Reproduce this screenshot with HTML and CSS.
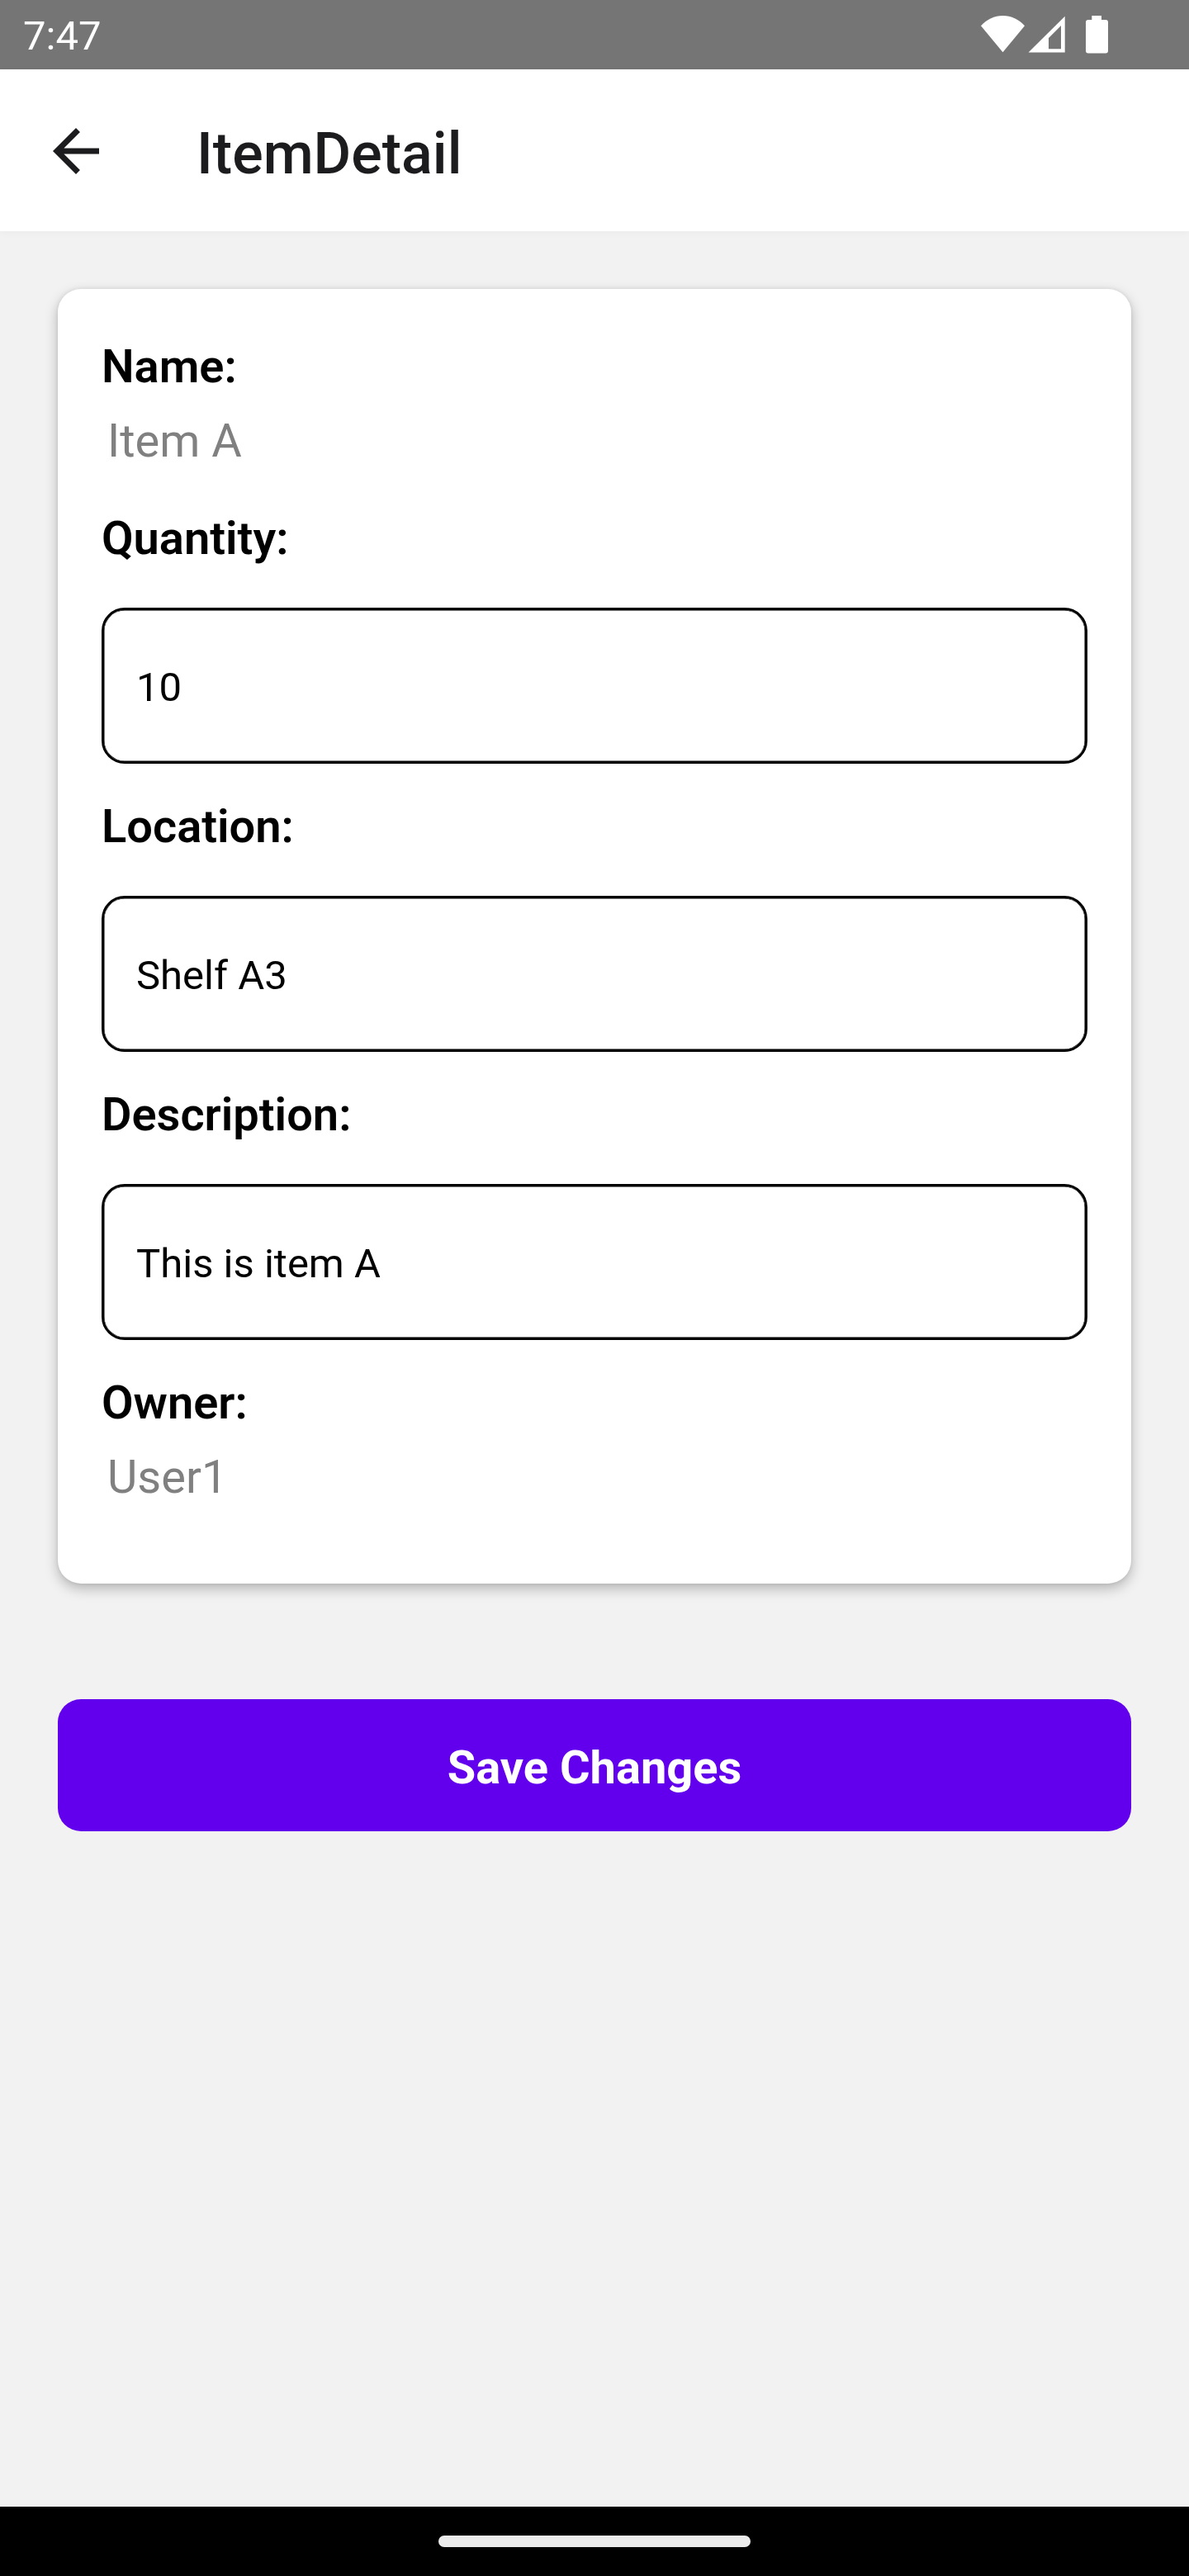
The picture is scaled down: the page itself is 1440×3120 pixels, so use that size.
FILE: index.html
```html
<!DOCTYPE html>
<html lang="en">
<head>
<meta charset="utf-8">
<title>ItemDetail</title>
<link rel="stylesheet" href="styles.css">
</head>
<body>
<div class="screen">
  <div class="status-bar">
    <span class="clock">7:47</span>
    <svg class="status-icons" width="154" height="84" viewBox="1188 0 154 84" fill="#fff">
      <path d="M1214.5 63.3 1188 31.3C1195 23.500 1204.500 19 1214.500 19S1234 23.500 1241 31.300Z"/>
      <path fill-rule="evenodd" d="M1245.500 63.500 1289.700 19.700V63.500ZM1270 46V59.300H1285V31Z"/>
      <path d="M1322.300 19H1334V24H1339Q1342 24 1342 27V61.500Q1342 64.500 1339 64.500H1318Q1315 64.500 1315 61.500V27Q1315 24 1318 24H1322.300Z"/>
    </svg>
  </div>
  <header class="app-bar">
    <svg class="back" width="84" height="84" viewBox="0 0 24 24" fill="#1c1c1e"><path d="M20 11H7.830l5.590-5.590L12 4l-8 8 8 8 1.410-1.410L7.830 13H20z"/></svg>
    <h1 class="title">ItemDetail</h1>
  </header>
  <main class="content">
    <section class="card">
      <div class="label">Name:</div>
      <div class="value">Item A</div>
      <label class="label" for="quantity">Quantity:</label>
      <input class="field" id="quantity" value="10">
      <label class="label" for="location">Location:</label>
      <input class="field" id="location" value="Shelf A3">
      <label class="label" for="description">Description:</label>
      <input class="field" id="description" value="This is item A">
      <div class="label">Owner:</div>
      <div class="value">User1</div>
    </section>
    <button class="save">Save Changes</button>
  </main>
  <div class="nav-bar"><div class="handle"></div></div>
</div>
</body>
</html>
```
FILE: styles.css
```css
* { box-sizing: border-box; }
body { margin: 0; font-family: Roboto, sans-serif; background: #f2f2f2; }
.screen { display: flex; flex-direction: column; height: 3120px; width: 1440px; }
.status-bar { display: flex; justify-content: space-between; align-items: center; height: 84px; padding: 0 98px 0 28px; background: #757575; }
.clock { font-size: 49px; line-height: 58px; color: #fff; padding-top: 4px; }
.status-icons { display: block; }
.app-bar { display: flex; align-items: center; height: 196px; padding: 2px 0 0 50px; background: #fff; box-shadow: 0 2px 10px rgba(0, 0, 0, 0.03); }
.title { margin: 0 0 0 104px; font-size: 70px; line-height: 82px; font-weight: 500; color: #1c1c1e; padding-top: 5px; }
.content { flex: 1; display: flex; flex-direction: column; gap: 140px; padding: 70px; }
.card { display: flex; flex-direction: column; height: 1568px; padding: 61px 53px 0; border-radius: 28px; background: #fff; box-shadow: 0 6px 16px rgba(0, 0, 0, 0.26), 0 0 5px rgba(0, 0, 0, 0.08); }
.label { font-size: 56px; line-height: 66px; font-weight: 600; color: #000; }
.value { margin: 24px 0 52px 7px; font-size: 56px; line-height: 66px; color: #808080; }
.field { height: 189px; margin: 51px 0 43px; padding: 3px 39px 0; border: 3px solid #000; border-radius: 28px; outline: none; background: #fff; box-shadow: inset 0 0 0 0.5px #000; font-family: inherit; font-size: 49px; color: #000; }
.save { height: 160px; padding: 6px 0 0; border: 0; border-radius: 28px; background: #6200ee; color: #fff; font-family: inherit; font-size: 56px; line-height: 66px; font-weight: 700; }
.nav-bar { display: flex; justify-content: center; height: 84px; padding-top: 35px; background: #000; }
.handle { width: 378px; height: 14px; border-radius: 7px; background: #ebebeb; }
```
